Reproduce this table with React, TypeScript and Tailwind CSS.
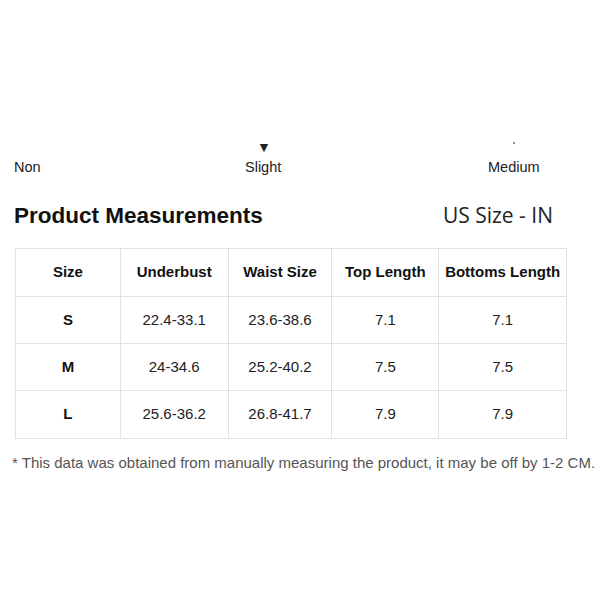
import React from 'react';

const rows = [
  ['S', '22.4-33.1', '23.6-38.6', '7.1', '7.1'],
  ['M', '24-34.6', '25.2-40.2', '7.5', '7.5'],
  ['L', '25.6-36.2', '26.8-41.7', '7.9', '7.9'],
];

const headers = ['Size', 'Underbust', 'Waist Size', 'Top Length', 'Bottoms Length'];
const widths = ['w-[105px]', 'w-[108px]', 'w-[104px]', 'w-[107px]', 'w-[127px]'];

export default function App() {
  return (
    <div className="w-[600px] h-[600px] bg-white font-['Liberation_Sans',Arial,sans-serif] text-[#1a1a1a]">
      <div className="pt-[139px] pl-[14px] grid grid-cols-[231px_243px_1fr] text-[14.5px] text-[#222]">
        <div className="flex flex-col">
          <span className="h-[18px]"></span>
          <span>Non</span>
        </div>
        <div className="flex flex-col">
          <span className="h-[18px] pl-[12px] text-[14px] leading-[16px]">▼</span>
          <span>Slight</span>
        </div>
        <div className="flex flex-col">
          <span className="h-[18px] pl-[25px] flex items-start pt-[3px]">
            <span className="w-[2px] h-[2px] rounded-full bg-[#666]"></span>
          </span>
          <span>Medium</span>
        </div>
      </div>
      <div className="flex items-center justify-between pl-[14px] pr-[47px] mt-[17px] h-[40px]">
        <div className="text-[22.5px] font-bold text-[#111]">Product Measurements</div>
        <div className="text-[21px] text-[#222] font-['Open_Sans',sans-serif]">US Size - IN</div>
      </div>
      <div className="ml-[15px] mt-[12px] w-[552px] border border-[#e2e2e2]">
        <div className="flex h-[48px] border-b border-[#e2e2e2]">
          {headers.map((h, i) => (
            <div
              key={h}
              className={`${widths[i]} flex items-center justify-center text-[15px] font-bold text-[#111] ${i < 4 ? 'border-r border-[#e2e2e2]' : ''}`}
            >
              {h}
            </div>
          ))}
        </div>
        {rows.map((r, ri) => (
          <div key={ri} className={`flex h-[47px] ${ri < 2 ? 'border-b border-[#e2e2e2]' : ''}`}>
            {r.map((c, i) => (
              <div
                key={i}
                className={`${widths[i]} flex items-center justify-center text-[15px] ${i === 0 ? 'font-bold text-[#111]' : 'text-[#222]'} ${i < 4 ? 'border-r border-[#e2e2e2]' : ''}`}
              >
                {c}
              </div>
            ))}
          </div>
        ))}
      </div>
      <div className="pl-[12px] mt-[13px] text-[15px] text-[#555] whitespace-nowrap">
        * This data was obtained from manually measuring the product, it may be off by 1-2 CM.
      </div>
    </div>
  );
}
